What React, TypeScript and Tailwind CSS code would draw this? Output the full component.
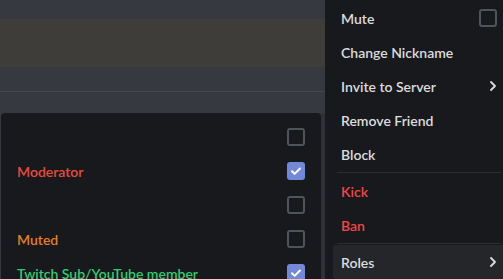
function Checkbox({ checked }: { checked?: boolean }) {
  if (checked) {
    return (
      <span className="flex h-[18px] w-[18px] items-center justify-center rounded-[3px] bg-[#7289da]">
        <svg width="12" height="12" viewBox="0 0 12 12" fill="none">
          <path d="M2 6.3l2.6 2.6L10 3.5" stroke="#fff" strokeWidth="2" strokeLinecap="round" strokeLinejoin="round" />
        </svg>
      </span>
    );
  }
  return <span className="h-[18px] w-[18px] rounded-[3px] border-2 border-[#4f545c]" />;
}

function Chevron() {
  return (
    <svg width="8" height="12" viewBox="0 0 8 12" fill="none">
      <path d="M2 2l4 4-4 4" stroke="#dcddde" strokeWidth="1.8" strokeLinecap="round" strokeLinejoin="round" />
    </svg>
  );
}

function MenuItem({
  label,
  danger,
  active,
  right,
}: {
  label: string;
  danger?: boolean;
  active?: boolean;
  right?: React.ReactNode;
}) {
  return (
    <div
      className={`flex h-[34px] items-center justify-between rounded-[3px] px-2 text-[14px] font-semibold ${
        danger ? "text-[#f04747]" : "text-[#dcddde]"
      } ${active ? "bg-[#24262a]" : ""}`}
    >
      <span>{label}</span>
      {right}
    </div>
  );
}

const roles = [
  { name: "", color: "", checked: false },
  { name: "Moderator", color: "text-[#e74c3c]", checked: true },
  { name: "", color: "", checked: false },
  { name: "Muted", color: "text-[#e67e22]", checked: false },
  { name: "Twitch Sub/YouTube member", color: "text-[#2ecc71]", checked: true },
];

export default function App() {
  return (
    <div
      className="relative h-[279px] w-[503px] overflow-hidden bg-[#36393f]"
      style={{ fontFamily: 'Lato, "Noto Sans", sans-serif' }}
    >
      {/* chat behind the menus */}
      <div className="h-[19px]" />
      <div className="h-[48px] bg-[#3f3d3a]" />
      <div className="h-[24px]" />
      <div className="h-px bg-[#44474d]" />

      <div className="absolute left-[321px] top-[113px] h-[166px] w-[4px] bg-[#2f3136]" />

      {/* roles submenu */}
      <div className="absolute left-[1px] top-[113px] w-[320px] rounded-[4px] bg-[#18191c] px-2 pt-[7px] pb-2">
        {roles.map((r, i) => (
          <div
            key={i}
            className={`flex h-[34px] items-center justify-between px-2 text-[14px] font-semibold ${r.color}`}
          >
            <span>{r.name}</span>
            <Checkbox checked={r.checked} />
          </div>
        ))}
      </div>

      {/* user context menu */}
      <div className="absolute left-[325px] top-0 w-[188px] bg-[#18191c] px-2 pt-px">
        <MenuItem label="Mute" right={<Checkbox />} />
        <MenuItem label="Change Nickname" />
        <MenuItem label="Invite to Server" right={<Chevron />} />
        <MenuItem label="Remove Friend" />
        <MenuItem label="Block" />
        <div className="mx-1 my-px h-px bg-[#2b2d31]" />
        <MenuItem label="Kick" danger />
        <MenuItem label="Ban" danger />
        <div className="mx-1 my-px h-px bg-[#2b2d31]" />
        <MenuItem label="Roles" active right={<Chevron />} />
      </div>
    </div>
  );
}
